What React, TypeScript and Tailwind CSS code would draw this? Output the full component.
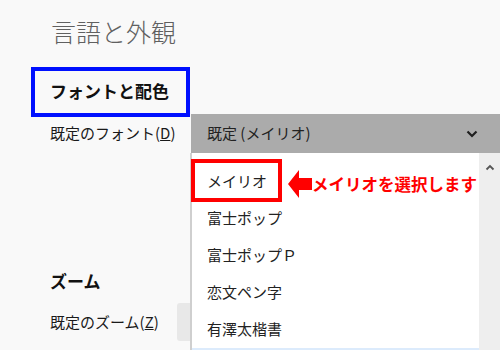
import React from "react";

const fonts = ["メイリオ", "富士ポップ", "富士ポップＰ", "恋文ペン字", "有澤太楷書", ""];

function Chevron({ up = false }: { up?: boolean }) {
  return (
    <svg width="12" height="8" viewBox="0 0 12 8" className={up ? "rotate-180" : ""}>
      <path d="M1.5 1.5 L6 6 L10.5 1.5" fill="none" stroke="#1f1f1f" strokeWidth="2.2" />
    </svg>
  );
}

function FontDropdown() {
  return (
    <div className="absolute left-[190px] top-[153px] w-[310px] h-[197px] flex bg-white border-l-2 border-[#cfcfcf]">
      <div className="flex-1 flex flex-col pt-[10px]">
        {fonts.map((name, i) => (
          <div
            key={i}
            className={
              "h-[37px] shrink-0 flex items-center pl-[15px] text-[15px] text-[#222] " +
              (i === 5 ? "bg-[#dcebfc]" : "")
            }
          >
            {name}
          </div>
        ))}
      </div>
      <div className="w-[21px] bg-[#eeeeee] flex justify-center pt-[11px]">
        <svg width="10" height="7" viewBox="0 0 10 7">
          <path d="M1.5 5.5 L5 2 L8.5 5.5" fill="none" stroke="#555" strokeWidth="1.8" />
        </svg>
      </div>

      {/* annotation */}
      <div className="absolute left-[-1px] top-[6px] w-[91px] h-[43px] border-[4px] border-[#ff0000]" />
      <div className="absolute left-[96px] top-[17px] flex items-center">
        <svg width="24" height="28" viewBox="0 0 24 28">
          <path d="M0 14 L11 0 L11 8 L24 8 L24 20 L11 20 L11 28 Z" fill="#ff0000" />
        </svg>
        <span className="text-[16.5px] font-bold text-[#ff0000] leading-none">
          メイリオを選択します
        </span>
      </div>
    </div>
  );
}

export default function App() {
  return (
    <div
      className="relative w-[500px] h-[350px] overflow-hidden bg-[#f9f9f9] text-[#1a1a1a]"
      style={{ fontFamily: '"Noto Sans CJK JP", "Noto Sans", sans-serif' }}
    >
      <div className="pl-[51px] pt-[15px] text-[25px] leading-[32px] font-light text-[#606060]">
        言語と外観
      </div>

      <div className="ml-[31px] mt-[20px] w-[159px] h-[50px] border-[4px] border-[#0010ff] flex items-center pl-[15px] pb-[2px]">
        <span className="text-[17px] font-bold text-[#111]">フォントと配色</span>
      </div>

      <div className="flex items-center mt-[-3px] h-[39px]">
        <div className="w-[191px] pl-[50px] text-[15px]">
          既定のフォント(<span className="underline">D</span>)
        </div>
        <div className="flex-1 h-full bg-[#ababab] flex items-center justify-between pl-[16px] pr-[22px]">
          <span className="text-[15px] text-[#222]">既定 (メイリオ)</span>
          <Chevron />
        </div>
      </div>

      <div className="pl-[50px] mt-[116px] text-[17px] font-bold text-[#111] leading-[24px]">ズーム</div>

      <div className="flex items-center mt-[10px] h-[38px]">
        <div className="w-[177px] pl-[50px] text-[15px]">
          既定のズーム(<span className="underline">Z</span>)
        </div>
        <div className="w-[20px] h-full bg-[#e8e8e8] rounded-l-[3px]" />
      </div>

      <FontDropdown />
    </div>
  );
}
